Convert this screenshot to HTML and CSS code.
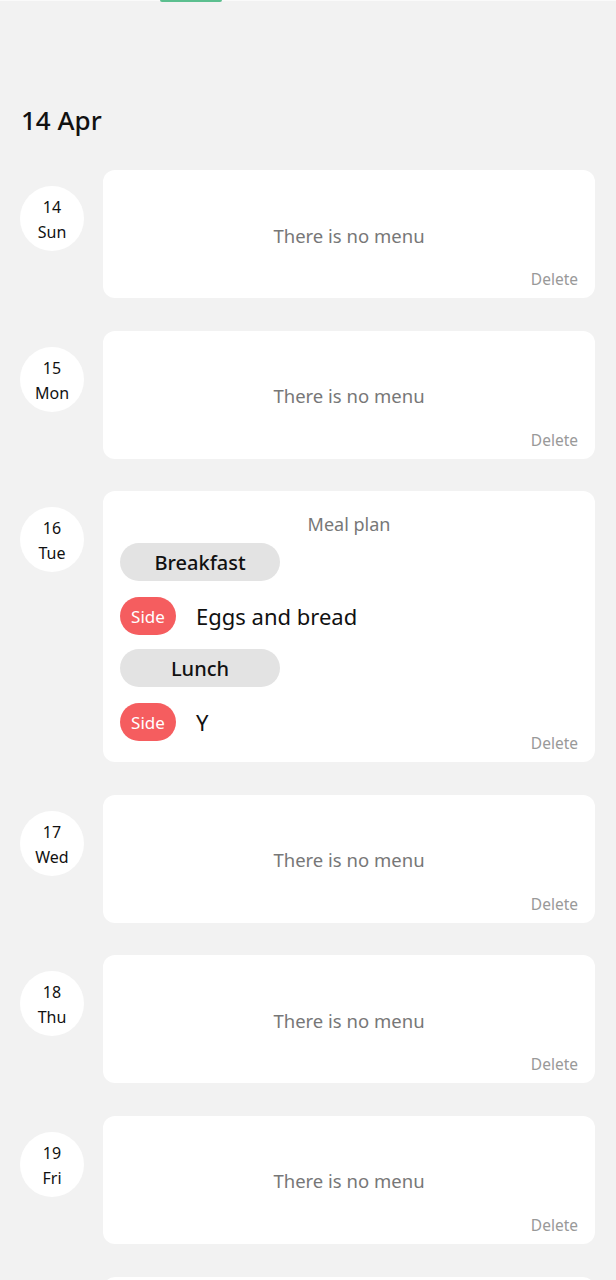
FILE: index.html
```html
<!DOCTYPE html>
<html>
<head>
<meta charset="utf-8">
<link rel="stylesheet" href="styles.css">
</head>
<body>
<div class="topbar"><div class="indicator"></div></div>
<h1 class="month">14 Apr</h1>
<div class="list">
  <div class="day">
    <div class="date"><span>14</span><span>Sun</span></div>
    <div class="card empty"><div class="msg">There is no menu</div><div class="del">Delete</div></div>
  </div>
  <div class="day">
    <div class="date"><span>15</span><span>Mon</span></div>
    <div class="card empty"><div class="msg">There is no menu</div><div class="del">Delete</div></div>
  </div>
  <div class="day">
    <div class="date"><span>16</span><span>Tue</span></div>
    <div class="card plan">
      <div class="plan-body">
        <div class="plan-title">Meal plan</div>
        <div class="meal">Breakfast</div>
        <div class="dish"><span class="tag">Side</span><span class="dish-name">Eggs and bread</span></div>
        <div class="meal">Lunch</div>
        <div class="dish"><span class="tag">Side</span><span class="dish-name">Y</span></div>
      </div>
      <div class="del">Delete</div>
    </div>
  </div>
  <div class="day">
    <div class="date"><span>17</span><span>Wed</span></div>
    <div class="card empty"><div class="msg">There is no menu</div><div class="del">Delete</div></div>
  </div>
  <div class="day">
    <div class="date"><span>18</span><span>Thu</span></div>
    <div class="card empty"><div class="msg">There is no menu</div><div class="del">Delete</div></div>
  </div>
  <div class="day">
    <div class="date"><span>19</span><span>Fri</span></div>
    <div class="card empty"><div class="msg">There is no menu</div><div class="del">Delete</div></div>
  </div>
  <div class="day">
    <div class="date blank"></div>
    <div class="card empty"></div>
  </div>
</div>
</body>
</html>
```
FILE: styles.css
```css
html, body {
  margin: 0;
  padding: 0;
  background: #f2f2f2;
  font-family: "Noto Sans", Roboto, sans-serif;
  color: #111;
  height: 1280px;
  overflow: hidden;
}
.topbar {
  height: 2px;
  border-top: 1px solid #fafafa;
  display: flex;
}
.indicator {
  margin-left: 160px;
  width: 62px;
  height: 2px;
  margin-top: -1px;
  background: #5cbf8f;
  border-radius: 0 0 2px 2px;
}
.month {
  margin: 0;
  padding: 99px 0 0 21px;
  font-size: 26px;
  font-weight: 500;
  line-height: 36px;
  color: #111;
}
.list {
  margin-top: 32px;
  display: flex;
  flex-direction: column;
  gap: 32.6px;
  padding: 0 21px 0 20px;
}
.day {
  display: flex;
  gap: 19px;
  align-items: flex-start;
}
.date {
  flex: none;
  box-sizing: border-box;
  width: 64px;
  height: 65px;
  padding-top: 3px;
  margin-top: 16px;
  border-radius: 50%;
  background: #fff;
  display: flex;
  flex-direction: column;
  align-items: center;
  justify-content: center;
  font-size: 16px;
  line-height: 25px;
  color: #111;
}
.card {
  flex: 1;
  background: #fff;
  border-radius: 12px;
  display: grid;
  grid-template-areas: "cell";
}
.card > * { grid-area: cell; }
.empty { height: 128px; }
.msg {
  align-self: center;
  justify-self: center;
  font-size: 18.5px;
  color: #777;
  margin-top: 2px;
}
.del {
  align-self: end;
  justify-self: end;
  font-size: 15.5px;
  color: #999;
  padding: 0 17px 8px 0;
}
.plan-body {
  padding: 20px 0 21px 17px;
  display: flex;
  flex-direction: column;
}
.plan-title {
  align-self: center;
  margin-left: -17px;
  font-size: 18px;
  line-height: 26px;
  color: #777;
}
.meal {
  width: 160px;
  height: 38px;
  margin-top: 6px;
  border-radius: 19px;
  background: #e3e3e3;
  display: flex;
  align-items: center;
  justify-content: center;
  font-size: 20px;
  font-weight: 500;
  color: #111;
}
.dish {
  display: flex;
  align-items: center;
  gap: 20px;
  margin: 16px 0 8px;
}
.dish:last-child { margin-bottom: 0; }
.tag {
  width: 56px;
  height: 38px;
  border-radius: 19px;
  background: #f55d5f;
  color: #fff;
  font-size: 17px;
  display: flex;
  align-items: center;
  justify-content: center;
}
.dish-name {
  font-size: 22px;
  color: #111;
}
```
